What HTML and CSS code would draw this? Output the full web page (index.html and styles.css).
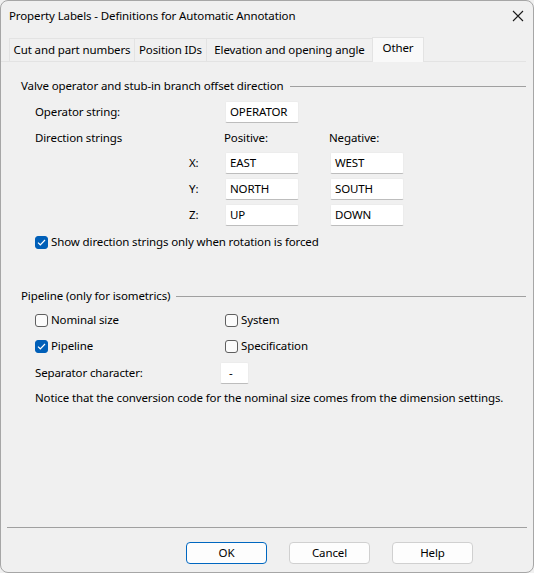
FILE: index.html
```html
<!DOCTYPE html>
<html lang="en">
<head>
<meta charset="utf-8">
<title>Property Labels</title>
<link rel="stylesheet" href="styles.css">
</head>
<body>
<div class="window">
  <div class="titlebar">
    <span class="title">Property Labels - Definitions for Automatic Annotation</span>
    <span class="close"><svg width="12" height="12" viewBox="0 0 12 12"><path d="M1 1L11 11M11 1L1 11" stroke="#1b1b1b" stroke-width="1.1" fill="none"/></svg></span>
  </div>
  <div class="tabs">
    <div class="tab tab-cut">Cut and part numbers</div>
    <div class="tab tab-pos">Position IDs</div>
    <div class="tab tab-elev">Elevation and opening angle</div>
    <div class="tab tab-other active">Other</div>
  </div>
  <div class="panel">
    <div class="group-head"><span>Valve operator and stub-in branch offset direction</span><div class="rule"></div></div>
    <div class="valve-grid">
      <div class="lbl span2">Operator string:</div>
      <div class="input c3">OPERATOR</div>
      <div class="lbl span2">Direction strings</div>
      <div class="lbl c3 colhead">Positive:</div>
      <div class="lbl c5 colhead">Negative:</div>
      <div class="lbl c2">X:</div>
      <div class="input c3">EAST</div>
      <div class="input c5">WEST</div>
      <div class="lbl c2">Y:</div>
      <div class="input c3">NORTH</div>
      <div class="input c5">SOUTH</div>
      <div class="lbl c2">Z:</div>
      <div class="input c3">UP</div>
      <div class="input c5">DOWN</div>
    </div>
    <label class="check-row single"><span class="box checked"><svg width="9" height="7" viewBox="0 0 9 7"><path d="M1 3.6L3.3 5.8L8 1" stroke="#fff" stroke-width="1.2" fill="none"/></svg></span>Show direction strings only when rotation is forced</label>

    <div class="group-head pipeline-head"><span>Pipeline (only for isometrics)</span><div class="rule"></div></div>
    <div class="pipe-grid">
      <label class="check-row"><span class="box"></span>Nominal size</label>
      <label class="check-row"><span class="box"></span>System</label>
      <label class="check-row"><span class="box checked"><svg width="9" height="7" viewBox="0 0 9 7"><path d="M1 3.6L3.3 5.8L8 1" stroke="#fff" stroke-width="1.2" fill="none"/></svg></span>Pipeline</label>
      <label class="check-row"><span class="box"></span>Specification</label>
    </div>
    <div class="sep-row">
      <div class="lbl sep-lbl">Separator character:</div>
      <div class="input sep-input">-</div>
    </div>
    <div class="notice">Notice that the conversion code for the nominal size comes from the dimension settings.</div>
  </div>
  <div class="footer">
    <div class="btn default">OK</div>
    <div class="btn">Cancel</div>
    <div class="btn">Help</div>
  </div>
</div>
</body>
</html>
```
FILE: styles.css
```css
* { box-sizing: border-box; }
html, body { margin: 0; padding: 0; background: #f0f0f0; }
body {
  font-family: "Noto Sans", "Open Sans", sans-serif;
  font-size: 11.5px;
  letter-spacing: -0.12px;
  color: #000;
}
.window {
  width: 534px;
  height: 573px;
  border: 1px solid #a6a6a6;
  border-radius: 8px;
  background: #f0f0f0;
  display: flex;
  flex-direction: column;
  overflow: hidden;
}
.titlebar {
  height: 30px;
  display: flex;
  align-items: center;
  justify-content: space-between;
  padding: 0 9px 0 8px;
  flex-shrink: 0;
}
.title { line-height: 16px; }
.close { display: flex; width: 12px; height: 12px; }
.tabs {
  display: flex;
  align-items: flex-end;
  padding-left: 8px;
  margin-top: 6px;
  height: 25px;
  flex-shrink: 0;
}
.tab {
  height: 23px;
  line-height: 21px;
  text-align: center;
  border: 1px solid #e3e3e3;
  border-bottom: none;
  background: #f0f0f0;
  margin-left: -1px;
  margin-bottom: 1px;
  white-space: nowrap;
}
.tab:first-child { margin-left: 0; }
.tab-cut { width: 126px; }
.tab-pos { width: 73px; }
.tab-elev { width: 167px; }
.tab-other { width: 52px; }
.tab.active {
  height: 25px;
  line-height: 20px;
  background: #f9f9f9;
  margin-bottom: 0;
  position: relative;
  z-index: 1;
}
.panel {
  flex: 1;
  border-top: 1px solid #e3e3e3;
  margin-right: 7px;
  padding: 16px 0 0 20px;
  margin-top: -1px;
}
.group-head {
  display: flex;
  align-items: center;
  height: 16px;
  line-height: 16px;
}
.group-head .rule {
  flex: 1;
  height: 1px;
  background: #a0a0a0;
  margin-left: 6px;
}
.lbl { line-height: 16px; align-self: center; white-space: nowrap; }
.valve-grid {
  display: grid;
  grid-template-columns: 154px 36px 74px 31px 74px;
  grid-template-rows: 22px 21px 22px 22px 22px;
  row-gap: 4px;
  margin: 7px 0 0 14px;
}
.span2 { grid-column: 1 / 3; }
.c2 { grid-column: 2; }
.c3 { grid-column: 3; }
.c5 { grid-column: 5; }
.colhead { margin-left: -1px; }
.input {
  height: 22px;
  background: #fff;
  border: 1px solid #ececec;
  border-bottom-color: #bdbdbd;
  border-radius: 2px;
  padding: 0 4px;
  line-height: 19px;
  white-space: nowrap;
}
.check-row {
  display: flex;
  align-items: center;
  height: 16px;
  line-height: 16px;
  white-space: nowrap;
}
.single { margin: 8px 0 0 14px; }
.box {
  width: 13px;
  height: 13px;
  border: 1px solid #5f5f5f;
  border-radius: 3px;
  margin-right: 3px;
  display: flex;
  align-items: center;
  justify-content: center;
  background: #fbfbfb;
  flex-shrink: 0;
}
.box.checked { background: #005fb8; border-color: #005fb8; }
.pipeline-head { margin-top: 38px; }
.pipe-grid {
  display: grid;
  grid-template-columns: 190px 150px;
  grid-template-rows: 16px 16px;
  row-gap: 10px;
  margin: 8px 0 0 14px;
}
.sep-row {
  display: flex;
  align-items: center;
  margin: 8px 0 0 14px;
}
.sep-lbl { width: 185px; }
.sep-input { width: 29px; padding-left: 8px; }
.notice { margin: 6px 0 0 14px; line-height: 16px; white-space: nowrap; }
.footer {
  flex-shrink: 0;
  margin: 0 6px;
  border-top: 1px solid #a0a0a0;
  height: 45px;
  display: flex;
  justify-content: flex-end;
  gap: 22px;
  padding: 14px 54px 0 0;
}
.btn {
  width: 81px;
  height: 22px;
  border: 1px solid #d0d0d0;
  border-radius: 4px;
  background: #fdfdfd;
  text-align: center;
  line-height: 20px;
}
.btn.default { border-color: #0067c0; }
```
